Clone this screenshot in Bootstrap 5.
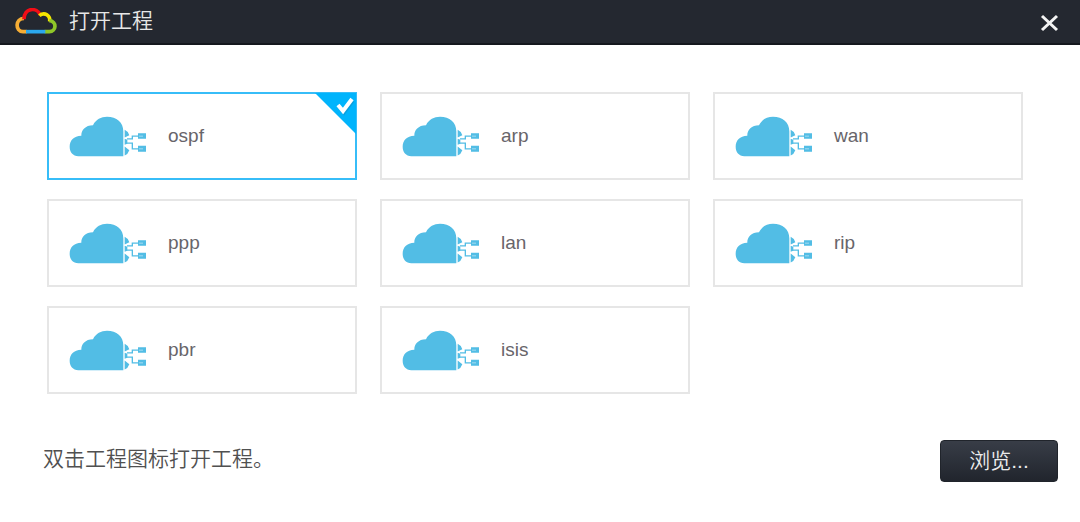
<!DOCTYPE html>
<html lang="zh-CN">
<head>
<meta charset="utf-8">
<meta name="viewport" content="width=device-width, initial-scale=1">
<title>打开工程</title>
<link href="https://cdn.jsdelivr.net/npm/bootstrap@5.3.0/dist/css/bootstrap.min.css" rel="stylesheet">
<style>
body { font-family: "Liberation Sans", "Noto Sans CJK SC", sans-serif; color: #505050; background: #fff; }
.title-bar { height: 45px; padding: 0 21px 2px 15px; color: #e8e8e8; background: #242830; border-bottom: 2px solid #15181e; }
.title-bar h1, .hint, .browse { font-family: "Liberation Sans", "Noto Sans CJK SC", sans-serif; font-size: 21px; line-height: 30px; font-weight: 350; }
.close-btn { color: #f4f4f4; line-height: 0; }
.projects { display: grid; grid-template-columns: repeat(3, 1fr); gap: 19px 23px; padding: 47px 57px 46px 47px; }
.project { height: 88px; padding: 0 20px; gap: 21px; border: 2px solid #e6e6e6; background: #fff; color: #68656a; font-size: 19px; line-height: 24px; }
.project.selected { border-color: #37bdf8; }
.corner { top: -1px; right: -1px; }
.actions { padding: 0 22px 20px 43px; }
.browse { width: 118px; height: 42px; padding: 0; color: #ececec; border: 1px solid #20242b; border-radius: 4px; background: linear-gradient(#383d47, #21252d); }
.browse:hover { color: #fff; border-color: #20242b; }
</style>
</head>
<body>
<svg class="d-none" aria-hidden="true">
  <symbol id="cloud" viewBox="12 16 234 122">
    <path fill="#52bde5" d="M175 136H40C24 136 14 125 14 108C14 89 26 76 49 75C48 58 61 43 84 43C93 26 108 18 126 18C155 18 175 35 175 62Z"/>
    <path fill="#52bde5" d="M179 57Q190 62 193 73L179 80ZM179 84L187 87V99L179 102ZM179 107L193 118Q189 130 179 134ZM219 67H243V84H219ZM219 105H243V123H219Z"/>
    <path fill="none" stroke="#52bde5" stroke-width="4" d="M186 84H202V76H222M186 97H202V114H222"/>
    <path fill="none" stroke="#a5dcf1" stroke-width="3" d="M222 76H234M222 114H234"/>
  </symbol>
</svg>

<header class="title-bar d-flex align-items-center">
  <svg width="42" height="26" viewBox="0 0 126 78" fill="none" stroke-width="11" aria-hidden="true">
    <path stroke="#f5ad35" d="M35 71H24C0 71 0 31 27 31"/>
    <path stroke="#f20d16" d="M27 34C27 -2 66 -3 76 21"/>
    <path stroke="#f6e600" d="M73 23C89 10 107 23 104 41"/>
    <path stroke="#8fc729" d="M103 38C127 40 124 71 103 71H89"/>
    <path stroke="#2ba8ee" d="M33 71H91"/>
  </svg>
  <h1 class="mb-0 ms-2 flex-grow-1"><span class="ps-sm-0 ms-1">打开工程</span></h1>
  <button type="button" class="close-btn btn border-0 p-0 mt-1" aria-label="关闭">
    <svg width="19" height="18" viewBox="0 0 19 18" fill="none" stroke="currentColor" stroke-width="3"><path d="M2 2L17 16M17 2L2 16"/></svg>
  </button>
</header>

<main>
  <div class="projects">
    <button type="button" class="project selected position-relative d-flex align-items-center" aria-pressed="true"><svg width="78" height="41" aria-hidden="true"><use href="#cloud"/></svg><span>ospf</span>
      <svg class="corner position-absolute" width="41" height="41" viewBox="0 0 41 41" aria-hidden="true"><path fill="#00b4fc" d="M0 0H41V41Z"/><path fill="none" stroke="#1689bd" stroke-opacity=".5" stroke-width="3" d="M24 14L29 20L38 8"/><path fill="none" stroke="#fff" stroke-width="4" d="M23 12L28 18L37 6"/></svg>
    </button>
    <button type="button" class="project d-flex align-items-center"><svg width="78" height="41" aria-hidden="true"><use href="#cloud"/></svg><span>arp</span></button>
    <button type="button" class="project d-flex align-items-center"><svg width="78" height="41" aria-hidden="true"><use href="#cloud"/></svg><span>wan</span></button>
    <button type="button" class="project d-flex align-items-center"><svg width="78" height="41" aria-hidden="true"><use href="#cloud"/></svg><span>ppp</span></button>
    <button type="button" class="project d-flex align-items-center"><svg width="78" height="41" aria-hidden="true"><use href="#cloud"/></svg><span>lan</span></button>
    <button type="button" class="project d-flex align-items-center"><svg width="78" height="41" aria-hidden="true"><use href="#cloud"/></svg><span>rip</span></button>
    <button type="button" class="project d-flex align-items-center"><svg width="78" height="41" aria-hidden="true"><use href="#cloud"/></svg><span>pbr</span></button>
    <button type="button" class="project d-flex align-items-center"><svg width="78" height="41" aria-hidden="true"><use href="#cloud"/></svg><span>isis</span></button>
  </div>
  <div class="actions d-flex justify-content-between align-items-start">
    <p class="hint mb-0 pt-1">双击工程图标打开工程。</p>
    <button type="button" class="browse btn">浏览...</button>
  </div>
</main>
<script src="https://cdn.jsdelivr.net/npm/bootstrap@5.3.0/dist/js/bootstrap.bundle.min.js"></script>
</body>
</html>
